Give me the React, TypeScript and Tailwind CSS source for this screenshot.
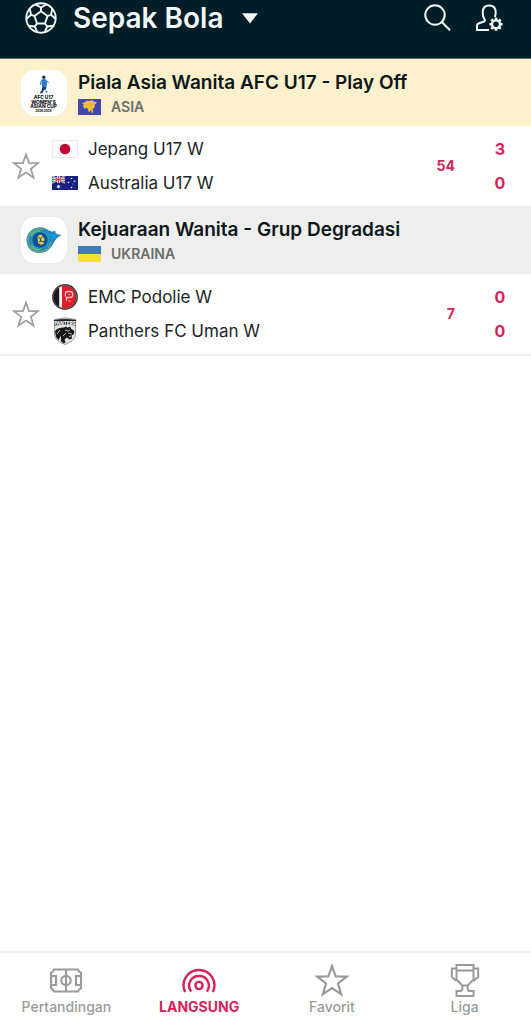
import type { ReactNode } from 'react';

function BallIcon() {
  return (
    <svg viewBox="0 0 32 32" className="size-8 shrink-0" fill="none" stroke="#f2f8f8" strokeWidth="1.9" strokeLinejoin="round" aria-hidden="true">
      <circle cx="16" cy="16" r="14.7" />
      <path d="M16 9.200l6.500 4.700-2.500 7.600h-8L9.500 13.900z" />
      <path d="M16 9.200V5.500M22.500 13.900l3.500-1.100M20 21.500l2.200 3M12 21.500l-2.200 3M9.500 13.900L6 12.800" />
      <path d="M21.500 2.400L16 5.500l-5.500-3.100M27.300 6.600L26 12.800l4.700 4.200M28.500 23.800l-6.300.7-2.600 5.800M3.500 23.800l6.300.7 2.600 5.800M4.700 6.600L6 12.800 1.300 17" />
    </svg>
  );
}

function SearchIcon() {
  return (
    <svg viewBox="0 0 28 28" className="size-7" fill="none" stroke="#f2f8f8" strokeWidth="2" aria-hidden="true">
      <circle cx="12" cy="11" r="9.700" />
      <path d="M18.800 18l8.200 8.300" />
    </svg>
  );
}

function UserSettingsIcon() {
  return (
    <svg viewBox="0 0 28 28" className="size-7" fill="none" stroke="#f2f8f8" strokeWidth="2" aria-hidden="true">
      <path d="M14 26H2v-4.400c0-1.300.8-2 2-2.400l5-1.700c1-.4 1.200-1.500.5-2.400C8.300 13.400 7.700 11.300 7.700 8.400c0-4.200 2.500-6.800 6.500-6.800s6.500 2.600 6.500 6.800c0 1.800-.3 3.300-.9 4.600" />
      <circle cx="21" cy="20.200" r="4" strokeWidth="2.400" />
      <path d="M21 13.600V16M21 24.400v2.400M14.400 20.200h2.400M25.200 20.200h2.400M16.300 15.500l1.700 1.700M24 23.200l1.700 1.700M16.300 24.900l1.700-1.700M24 17.200l1.700-1.700" strokeWidth="2.500" />
    </svg>
  );
}

function StarIcon({ className }: { className: string }) {
  return (
    <svg viewBox="0 0 34 34" className={className} fill="none" stroke="currentColor" strokeWidth="2.200" aria-hidden="true">
      <path d="M17 3.200l3.700 10.200 11 .2-8.700 6.900 3.100 10.700L17 25l-9.100 6.200L11 20.500l-8.700-6.900 11-.2z" />
    </svg>
  );
}

function PitchIcon() {
  return (
    <svg viewBox="0 0 34 34" className="size-[34px]" fill="none" stroke="currentColor" strokeWidth="2.200" aria-hidden="true">
      <path d="M5 6.500h24c.6 2 1.300 2.700 3 3.300v15.400c-1.700.6-2.400 1.300-3 3.300H5c-.6-2-1.300-2.700-3-3.300V9.800c1.700-.6 2.400-1.300 3-3.300zM17 6.500v22M2 13h5v9H2M32 13h-5v9h5" />
      <circle cx="17" cy="17.500" r="4.700" />
    </svg>
  );
}

function LiveIcon() {
  return (
    <svg viewBox="0 0 34 34" className="size-[34px]" fill="none" stroke="currentColor" strokeWidth="2.400" aria-hidden="true">
      <path d="M3.200 29A15.200 15.200 0 0 1 17 7a15.200 15.200 0 0 1 13.800 22" />
      <path d="M9.200 28.500A9.600 9.600 0 0 1 17 13a9.600 9.600 0 0 1 7.800 15.500" />
      <circle cx="17" cy="22.500" r="3.600" />
    </svg>
  );
}

function TrophyIcon() {
  return (
    <svg viewBox="0 0 34 34" className="size-[34px]" fill="none" stroke="currentColor" strokeWidth="2" aria-hidden="true">
      <path d="M8.500 2h17v14.500L19.700 22.500h-5.400l-5.800-6zM8.500 7.500h17M8.500 5.500H3.800V14l4.700 4M25.500 5.500h4.700V14l-4.700 4M14.300 22.500v3.700c-.3 1.300-1.200 1.800-2.800 1.800h-3v5h17v-5h-3c-1.600 0-2.500-.5-2.800-1.800v-3.700" />
    </svg>
  );
}

function AfcLogo() {
  return (
    <svg viewBox="0 0 46 46" className="size-[46px]" role="img" aria-label="AFC U17 Women's Asian Cup">
      <circle cx="22.800" cy="7.300" r="1.700" fill="#243445" />
      <path d="M20.500 9.500l3.500-.8 2.300 2.600-.7 5.200-4.400.6-.8-3z" fill="#2a7bd0" />
      <path d="M20.700 10l-1.500 3 .4 2M26 11l1.800 2" stroke="#35a4d8" strokeWidth="1" fill="none" />
      <path d="M21.500 16.500l4 .2-.7 3-1.800.3-1.500 3.200-3 .3 2-2.800z" fill="#173e74" />
      <circle cx="25.500" cy="21.700" r="1.100" fill="#319d9c" />
      <g fill="#1d211f" fontFamily="Inter, sans-serif" fontWeight="800" textAnchor="middle">
        <text x="22.500" y="29" fontSize="4.800">AFC U17</text>
        <text x="22.500" y="33.500" fontSize="4.800">WOMEN'S</text>
        <text x="22.500" y="38" fontSize="4.800">ASIAN CUP</text>
        <text x="22.500" y="41.500" fontSize="3">2026 2025</text>
      </g>
    </svg>
  );
}

function UkraineLeagueLogo() {
  return (
    <svg viewBox="0 0 46 46" className="size-[46px]" role="img" aria-label="Kejuaraan Wanita">
      <path d="M17 10.500c7-1 10 3.500 13.500 4 1.600.2 3-.7 3.500-.5.800.4.200 2 1 2.500l5.500 1.800c-4.500 1.500-6 5-8 8-2.700 5.500-7.300 9.700-13.700 9.700C11 36 5.500 30.500 5.500 23.500S10.500 11.500 17 10.500z" fill="#2386c0" />
      <path d="M22 12.500A11.500 11.500 0 1 0 30 25" fill="none" stroke="#5fa582" strokeWidth="1.800" />
      <circle cx="19" cy="23" r="8.500" fill="#124e9b" stroke="#1ba0b8" strokeWidth="1.600" />
      <path d="M10 19c1.500-4 6-5.500 9.500-5M10 28c2 4 7 5.500 10 4" stroke="#76bf68" strokeWidth="1.200" fill="none" />
      <path d="M16.500 19.500l2.500-2 2.500 1 2 4-1 4.500-2.500 1-3-2z" fill="#d9c84b" />
      <path d="M17.500 20.500l2 1 2-2M18 25l2-1 3 1M19.500 21.500v2.500" stroke="#17446a" strokeWidth="1" fill="none" />
      <path d="M27 17c3 2 6 2 9.500 1.300M30 22l5-2.500" stroke="#1a9be4" strokeWidth="1.600" fill="none" />
    </svg>
  );
}

function AsiaFlag() {
  return (
    <svg viewBox="0 0 23 16" className="h-4 w-[23px]" role="img" aria-label="Asia">
      <path d="M0 0h23v16H0z" fill="#4148b4" />
      <path d="M4 4l3-.8L8.500 1.700l3 .4L14 1l2 1.500 2.800.8-.8 1.700-1.500.5.5 2-1.500 2-1 .5.800 2-.5 2.300-1-.5-.6-2.300-1 .2-.8 2-1.200-2.200-.7-2.300-1.700-.2-1.300 1.300L6 8.500 4.800 7l1-1.700z" fill="#edbd37" />
    </svg>
  );
}

function UkraineFlag() {
  return (
    <svg viewBox="0 0 23 16" className="h-4 w-[23px]" role="img" aria-label="Ukraina">
      <path d="M0 0h23v8H0z" fill="#4179bd" />
      <path d="M0 8h23v8H0z" fill="#f6df38" />
    </svg>
  );
}

function JapanFlag() {
  return (
    <svg viewBox="0 0 26 18" className="h-[18px] w-[26px]" role="img" aria-label="Jepang">
      <path d="M.5.500h25v17H.5z" fill="#fff" stroke="#ebebeb" />
      <circle cx="13" cy="9" r="5.300" fill="#bd0a32" />
    </svg>
  );
}

function AustraliaFlag() {
  return (
    <svg viewBox="0 0 26 14" className="h-[14px] w-[26px]" role="img" aria-label="Australia">
      <path d="M0 0h26v14H0z" fill="#1a2185" />
      <path d="M0 0l13 7M13 0L0 7" stroke="#fff" strokeWidth="1.600" />
      <path d="M6.500 0v7M0 3.500h13" stroke="#fff" strokeWidth="2.600" />
      <path d="M6.500 0v7M0 3.500h13M0 0l13 7M13 0L0 7" stroke="#d73350" strokeWidth=".9" />
      <g fill="#fff">
        <path d="M6.500 8.500l.6 1.200 1.300-.2-.7 1.100.7 1.100-1.300-.1-.6 1.100-.6-1.100-1.300.1.700-1.100-.7-1.100 1.300.2z" />
        <circle cx="19.500" cy="2.500" r=".8" />
        <circle cx="16.500" cy="6.500" r=".8" />
        <circle cx="22.700" cy="5.300" r=".8" />
        <circle cx="20.800" cy="8" r=".4" />
        <circle cx="19.500" cy="11.500" r=".8" />
      </g>
    </svg>
  );
}

function PodolieCrest() {
  return (
    <svg viewBox="0 0 26 26" className="size-[26px]" role="img" aria-label="EMC Podolie">
      <circle cx="13" cy="13" r="12.900" fill="#423638" />
      <circle cx="13" cy="13" r="11.400" fill="none" stroke="#a76d6e" strokeWidth=".7" />
      <path d="M7 3.500v19A11 11 0 0 1 7 3.500z" fill="#171d20" />
      <path d="M7.200 3.500L10 2.300v21.400l-2.800-1.300z" fill="#f5f0ef" />
      <path d="M10 2.300a11 11 0 1 1 0 21.400z" fill="#e41c2b" />
      <path d="M13.300 12.500V10a2.500 2.500 0 0 1 2.500-2.500h2a3 3 0 0 1 0 6h-3.300v3.300" fill="none" stroke="#f7c3c9" strokeWidth="1.300" />
      <path d="M16.500 10.500h1.500M16.500 17h2" stroke="#f3c4c8" strokeWidth="1" />
    </svg>
  );
}

function PanthersCrest() {
  return (
    <svg viewBox="0 0 26 28" className="h-7 w-[26px]" role="img" aria-label="Panthers FC Uman">
      <path d="M2.500 2.500L13 .8l10.500 1.700v15C23.500 22 19 25 13 27.500 7 25 2.500 22 2.500 17.500z" fill="#e4e4e4" stroke="#777" strokeWidth=".7" />
      <path d="M2 3c7-1.300 15-1.300 22 0v5.500c-7-1-15-1-22 0z" fill="#242424" />
      <text x="13" y="7.500" fontSize="4.600" fontWeight="800" fontFamily="Inter, sans-serif" textAnchor="middle" fill="#fff">PANTERS</text>
      <path d="M3 14c2-2.800 5.500-3.400 9-3.500l2-1 1.700 1.200L18 9.500l1.300 2.200 3 2.300-.3 3-2.500 1.500.5 3-2.500 1-2.500-2-2.500 2 1 3-1.700 1-3-2.500L9 18.500 6.500 23 4 20z" fill="#171717" />
      <path d="M13 13l3 1 2-1M16 16l4 1M8 13l-3 4M11 19l3-3M17 20l2-1" stroke="#ddd" strokeWidth=".8" fill="none" />
    </svg>
  );
}

interface Team {
  name: string;
  crest: ReactNode;
  score: number;
}

interface LeagueProps {
  title: string;
  country: string;
  logo: ReactNode;
  flag: ReactNode;
  featured?: boolean;
  minute: number;
  teams: Team[];
}

function League({ title, country, logo, flag, featured, minute, teams }: LeagueProps) {
  return (
    <section>
      <div className={`flex items-center gap-[11px] px-[21px] ${featured ? 'h-[67px] bg-[#fdf0cd]' : 'h-[68px] bg-[#eeeeee]'}`}>
        <div className="shrink-0 overflow-hidden rounded-[14px] bg-white">{logo}</div>
        <div className="min-w-0 pt-1">
          <h2 className="truncate text-[19px] leading-6 font-semibold text-[#0b1719]">{title}</h2>
          <div className="flex h-6 items-center gap-[10px]">
            {flag}
            <span className="text-[14px] leading-5 font-semibold text-[#6c6d69]">{country}</span>
          </div>
        </div>
      </div>
      <div className="flex items-center py-[6px] pr-[26px] pl-3">
        <button type="button" aria-label={`Favorit ${teams[0].name} - ${teams[1].name}`} className="shrink-0 text-[#a0a0a0]">
          <StarIcon className="size-7" />
        </button>
        <ul className="ml-3 min-w-0 flex-1">
          {teams.map((team) => (
            <li key={team.name} className="flex h-[34px] items-center gap-[10px]">
              {team.crest}
              <span className="truncate text-[17px] leading-6 text-[#1b2527]">{team.name}</span>
            </li>
          ))}
        </ul>
        <span className="w-12 text-right text-[14px] leading-5 font-bold text-[#d6245a]">{minute}</span>
        <div className="ml-10 w-[10px]">
          {teams.map((team) => (
            <div key={team.name} className="flex h-[34px] items-center justify-center text-[16px] leading-6 font-bold text-[#d6245a]">
              {team.score}
            </div>
          ))}
        </div>
      </div>
    </section>
  );
}

const tabs = [
  { label: 'Pertandingan', icon: <PitchIcon />, active: false },
  { label: 'LANGSUNG', icon: <LiveIcon />, active: true },
  { label: 'Favorit', icon: <StarIcon className="size-[34px]" />, active: false },
  { label: 'Liga', icon: <TrophyIcon />, active: false },
];

export default function App() {
  return (
    <div className="flex min-h-screen flex-col bg-white font-['Inter',sans-serif]">
      <header className="h-[59px] border-b border-[#62706b] bg-[#001e28]">
        <div className="flex h-9 items-center justify-between pr-7 pl-[25px]">
          <button type="button" className="flex items-center gap-4">
            <BallIcon />
            <span className="flex items-center gap-[18px]">
              <span className="text-[28px] leading-9 font-semibold text-[#f2f8f8]">Sepak Bola</span>
              <svg viewBox="0 0 16 11" className="h-[11px] w-4" fill="#f2f8f8" aria-hidden="true">
                <path d="M0 .2h16L8 10.500z" />
              </svg>
            </span>
          </button>
          <div className="flex items-center gap-6">
            <button type="button" aria-label="Cari"><SearchIcon /></button>
            <button type="button" aria-label="Pengaturan akun"><UserSettingsIcon /></button>
          </div>
        </div>
      </header>
      <main className="flex-1">
        <League
          title="Piala Asia Wanita AFC U17 - Play Off"
          country="ASIA"
          logo={<AfcLogo />}
          flag={<AsiaFlag />}
          featured
          minute={54}
          teams={[
            { name: 'Jepang U17 W', crest: <JapanFlag />, score: 3 },
            { name: 'Australia U17 W', crest: <AustraliaFlag />, score: 0 },
          ]}
        />
        <League
          title="Kejuaraan Wanita - Grup Degradasi"
          country="UKRAINA"
          logo={<UkraineLeagueLogo />}
          flag={<UkraineFlag />}
          minute={7}
          teams={[
            { name: 'EMC Podolie W', crest: <PodolieCrest />, score: 0 },
            { name: 'Panthers FC Uman W', crest: <PanthersCrest />, score: 0 },
          ]}
        />
        <div className="h-[2px] bg-[#eeeeee]" />
      </main>
      <nav className="sticky bottom-0 grid grid-cols-4 border-t-2 border-[#f2f2f2] bg-white">
        {tabs.map((tab) => (
          <a
            key={tab.label}
            href="#"
            aria-current={tab.active ? 'page' : undefined}
            className={`flex flex-col items-center pt-[10px] pb-[7px] ${tab.active ? 'text-[#d6245a]' : 'text-[#999b9a]'}`}
          >
            {tab.icon}
            <span className={`text-[14px] leading-5 ${tab.active ? 'font-bold' : 'font-medium'}`}>{tab.label}</span>
          </a>
        ))}
      </nav>
    </div>
  );
}
